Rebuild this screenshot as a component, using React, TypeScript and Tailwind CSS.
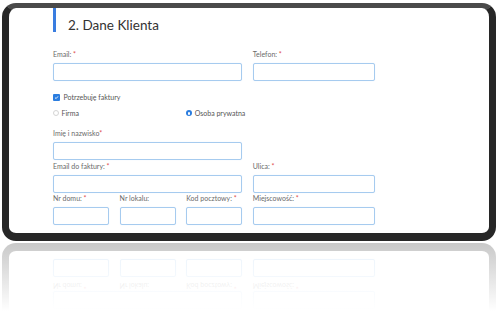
import React from 'react';

function Field({ label, req, star = ' *', span }: { label: string; req?: boolean; star?: string; span: string }) {
  return (
    <div className={span}>
      <div className="h-[10px] whitespace-nowrap text-[7px] leading-[10px] text-[#6a6a6a]">
        {label}
        {req && <span className="text-[#e04b4b]">{star}</span>}
      </div>
      <div className="mt-[4px] h-[18px] rounded-[2px] border border-[#a6cbef] bg-white shadow-[0_0_1px_#d3e6f8]" />
    </div>
  );
}

function Frame({ className = '' }: { className?: string }) {
  return (
    <div
      className={`h-[238px] w-[494px] overflow-hidden rounded-[14px] border-x-[7px] border-t-[5px] border-b-[8px] border-[#272727] border-t-[#4a4a4a] bg-white ${className}`}
    >
      <div className="pl-[44px] font-[Lato,sans-serif]">
        {/* Section header */}
        <div className="h-[24px] border-l-[3px] border-[#3a7de0] pl-[12px] pt-[9px]">
          <h2 className="text-[13.5px] leading-[16px] text-[#333]">2. Dane Klienta</h2>
        </div>

        <div className="mt-[17px] grid grid-cols-[repeat(5,56px)] gap-x-[10.6px]">
          <Field label="Email:" req span="col-span-3" />
          <Field label="Telefon:" req span="col-span-2" />
        </div>

        <div className="mt-[11.5px] flex h-[10px] items-center gap-[4px] text-[7px] text-[#555]">
          <span className="flex h-[6.5px] w-[6.5px] items-center justify-center rounded-[1px] bg-[#2b7ddf]">
            <svg viewBox="0 0 10 10" className="h-[5px] w-[5px]">
              <path d="M2 5.2 L4.2 7.2 L8 2.8" fill="none" stroke="white" strokeWidth="1.8" />
            </svg>
          </span>
          Potrzebuję faktury
        </div>

        <div className="mt-[5.5px] grid h-[10px] grid-cols-[repeat(5,56px)] gap-x-[10.6px] text-[7px] text-[#555]">
          <div className="col-span-2 flex items-center gap-[2.5px]">
            <span className="h-[6px] w-[6px] rounded-full border border-[#d4d4d4]" />
            Firma
          </div>
          <div className="col-span-3 flex items-center gap-[2.5px]">
            <span className="flex h-[6px] w-[6px] items-center justify-center rounded-full bg-[#2b7ddf]">
              <span className="h-[2.5px] w-[2.5px] rounded-full bg-white" />
            </span>
            Osoba prywatna
          </div>
        </div>

        <div className="mt-[10px] grid grid-cols-[repeat(5,56px)] gap-x-[10.6px]">
          <Field label="Imię i nazwisko" req star="*" span="col-span-3" />
        </div>

        <div className="mt-[1px] grid grid-cols-[repeat(5,56px)] gap-x-[10.6px]">
          <Field label="Email do faktury:" req span="col-span-3" />
          <Field label="Ulica:" req span="col-span-2" />
        </div>

        <div className="grid grid-cols-[repeat(5,56px)] gap-x-[10.6px]">
          <Field label="Nr domu:" req span="col-span-1" />
          <Field label="Nr lokalu:" span="col-span-1" />
          <Field label="Kod pocztowy:" req span="col-span-1" />
          <Field label="Miejscowość:" req span="col-span-2" />
        </div>
      </div>
    </div>
  );
}

export default function App() {
  return (
    <div className="h-[315px] w-[500px] overflow-hidden bg-white">
      <div className="ml-[2px] pt-[3px]">
        <Frame />
      </div>

      {/* Reflection */}
      <div className="relative ml-[2px] mt-[2px] h-[68px] overflow-hidden">
        <Frame className="-scale-y-100" />
        <div className="absolute inset-0 bg-linear-to-b from-white/75 to-white" />
      </div>
    </div>
  );
}
